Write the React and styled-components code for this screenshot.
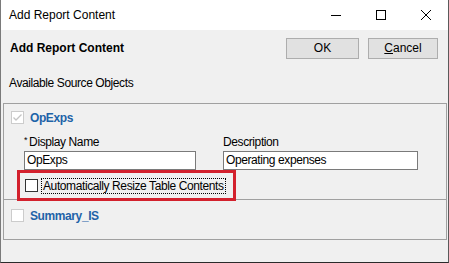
import React from "react";
import styled, { createGlobalStyle } from "styled-components";

const GlobalStyle = createGlobalStyle`
  html, body {
    margin: 0;
    padding: 0;
    background: #f0f0f0;
  }
  body {
    font-family: "Liberation Sans", Arial, sans-serif;
    font-size: 12px;
    color: #000;
  }
`;

const Window = styled.div`
  width: 449px;
  height: 263px;
  box-sizing: border-box;
  display: flex;
  flex-direction: column;
  background: #f0f0f0;
  border-left: 1px solid #7a7a7a;
  border-right: 1px solid #5a5a5a;
  border-bottom: 1px solid #2a2a2a;
  overflow: hidden;
`;

const TitleBar = styled.div`
  height: 30px;
  flex: none;
  display: flex;
  align-items: center;
  background: #fff;
  padding-left: 8px;
`;

const TitleText = styled.div`
  flex: 1;
  font-size: 12px;
  color: #000;
`;

const WinButton = styled.div`
  width: 45px;
  height: 30px;
  display: flex;
  align-items: center;
  justify-content: center;
`;

const Body = styled.div`
  flex: 1;
  display: flex;
  flex-direction: column;
  letter-spacing: -0.4px;
`;

const HeaderRow = styled.div`
  display: flex;
  align-items: center;
  height: 26px;
  margin-top: 5px;
  padding: 0 10px 0 9px;
`;

const Heading = styled.div`
  flex: 1;
  font-weight: bold;
  font-size: 12px;
  letter-spacing: 0;
`;

const Button = styled.button`
  width: ${(p) => p.$w}px;
  height: 21px;
  margin-left: ${(p) => p.$ml}px;
  box-sizing: border-box;
  background: #e1e1e1;
  border: 1px solid #adadad;
  font-family: inherit;
  font-size: 12px;
  color: #000;
  padding: 0;
`;

const SectionLabel = styled.div`
  margin: 15px 0 0 8px;
  height: 27px;
  line-height: 14px;
`;

const Panel = styled.div`
  margin: 0 1px 0 2px;
  border: 1px solid #a0a0a0;
  height: 137px;
  box-sizing: border-box;
  display: flex;
  flex-direction: column;
`;

const Item = styled.div`
  height: ${(p) => p.$h}px;
  flex: none;
  box-sizing: border-box;
  border-bottom: ${(p) => (p.$divider ? "1px solid #a0a0a0" : "none")};
  padding: ${(p) => p.$pt}px 0 0 7px;
`;

const ItemHeader = styled.div`
  display: flex;
  align-items: center;
  gap: 6px;
  height: 13px;
`;

const Check = styled.div`
  flex: none;
  width: 13px;
  height: 13px;
  box-sizing: border-box;
  border: 1px solid ${(p) => p.$color || "#cccccc"};
  background: #fff;
  display: flex;
  align-items: center;
  justify-content: center;
`;

const ItemName = styled.div`
  font-weight: bold;
  font-size: 12px;
  color: #1e63a8;
`;

const Fields = styled.div`
  display: flex;
  margin: 11px 0 0 13px;
  gap: 27px;
`;

const Field = styled.div`
  display: flex;
  flex-direction: column;
  width: ${(p) => p.$w}px;
`;

const FieldLabel = styled.div`
  height: 16px;
  line-height: 14px;
  white-space: nowrap;
`;

const Star = styled.span`
  font-size: 9px;
  line-height: 0;
  vertical-align: 3px;
  margin-right: 2px;
`;

const TextBox = styled.div`
  height: 19px;
  box-sizing: border-box;
  border: 1px solid #7a7a7a;
  background: #fff;
  padding: 0 2px;
  line-height: 17px;
  white-space: nowrap;
`;

const Highlight = styled.div`
  margin: 0 0 0 6px;
  width: 219px;
  height: 31px;
  box-sizing: border-box;
  border: 3px solid #d3212d;
  display: flex;
  align-items: center;
  padding-left: 5px;
  gap: 3px;
`;

const FocusText = styled.div`
  border: 1px dotted #000;
  padding: 0 1px;
  line-height: 14px;
  white-space: nowrap;
`;

const Underline = styled.span`
  text-decoration: underline;
`;

export default function App() {
  return (
    <>
      <GlobalStyle />
      <Window>
        <TitleBar>
          <TitleText>Add Report Content</TitleText>
          <WinButton>
            <svg width="12" height="12" viewBox="0 0 12 12">
              <line x1="1" y1="6.5" x2="11" y2="6.5" stroke="#000" strokeWidth="1" />
            </svg>
          </WinButton>
          <WinButton>
            <svg width="12" height="12" viewBox="0 0 12 12">
              <rect x="1.5" y="1.5" width="9" height="9" fill="none" stroke="#000" strokeWidth="1" />
            </svg>
          </WinButton>
          <WinButton>
            <svg width="12" height="12" viewBox="0 0 12 12">
              <path d="M1 1 L11 11 M11 1 L1 11" stroke="#000" strokeWidth="1" />
            </svg>
          </WinButton>
        </TitleBar>
        <Body>
          <HeaderRow>
            <Heading>Add Report Content</Heading>
            <Button $w={73} $ml={0}>OK</Button>
            <Button $w={70} $ml={9}>
              <Underline>C</Underline>ancel
            </Button>
          </HeaderRow>
          <SectionLabel>Available Source Objects</SectionLabel>
          <Panel>
            <Item $h={96} $pt={7} $divider>
              <ItemHeader>
                <Check>
                  <svg width="11" height="11" viewBox="0 0 11 11">
                    <path d="M1.5 5.5 L4 8 L9.5 2.5" fill="none" stroke="#c4c4c4" strokeWidth="1.3" />
                  </svg>
                </Check>
                <ItemName>OpExps</ItemName>
              </ItemHeader>
              <Fields>
                <Field $w={172}>
                  <FieldLabel>
                    <Star>*</Star>Display Name
                  </FieldLabel>
                  <TextBox>OpExps</TextBox>
                </Field>
                <Field $w={195}>
                  <FieldLabel>Description</FieldLabel>
                  <TextBox>Operating expenses</TextBox>
                </Field>
              </Fields>
              <Highlight>
                <Check $color="#333" />
                <FocusText>Automatically Resize Table Contents</FocusText>
              </Highlight>
            </Item>
            <Item $h={39} $pt={9}>
              <ItemHeader>
                <Check />
                <ItemName>Summary_IS</ItemName>
              </ItemHeader>
            </Item>
          </Panel>
        </Body>
      </Window>
    </>
  );
}
